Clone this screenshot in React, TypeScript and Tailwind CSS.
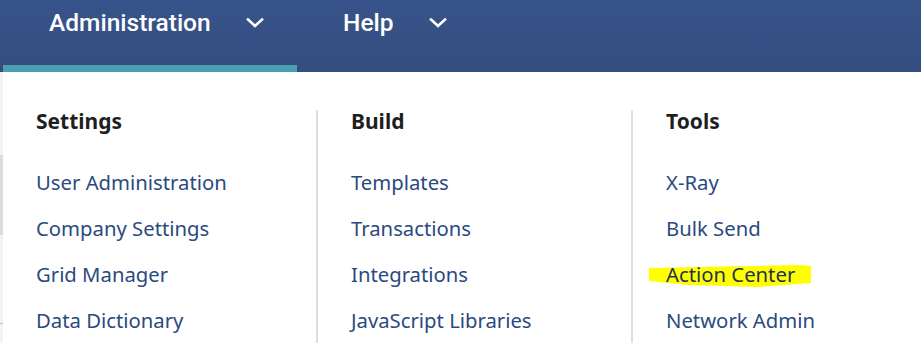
import React from "react";

const columns = [
  { title: "Settings", items: ["User Administration", "Company Settings", "Grid Manager", "Data Dictionary"] },
  { title: "Build", items: ["Templates", "Transactions", "Integrations", "JavaScript Libraries"] },
  { title: "Tools", items: ["X-Ray", "Bulk Send", "Action Center", "Network Admin"] },
];

function Chevron() {
  return (
    <svg width="18" height="12" viewBox="0 0 18 12" className="shrink-0">
      <path d="M2 2.5 L9 9 L16 2.5" fill="none" stroke="white" strokeWidth="2.6" strokeLinecap="square" />
    </svg>
  );
}

export default function App() {
  return (
    <div className="w-[921px] h-[343px] overflow-hidden bg-white" style={{ fontFamily: "'Noto Sans', sans-serif" }}>
      {/* Top nav */}
      <div className="h-[72px] bg-gradient-to-b from-[#37548b] to-[#334d7e] flex items-start">
        <div className="w-[294px] ml-[3px] h-full flex flex-col">
          <div className="flex items-center h-[46px] pl-[46px] gap-[35px]">
            <span className="text-white text-[24.5px] font-medium" style={{ fontFamily: "Roboto, sans-serif" }}>
              Administration
            </span>
            <Chevron />
          </div>
          <div className="mt-auto h-[7px] bg-[#4b9fb3]" />
        </div>
        <div className="flex items-center h-[46px] pl-[46px] gap-[35px]">
          <span className="text-white text-[24.5px] font-medium" style={{ fontFamily: "Roboto, sans-serif" }}>
            Help
          </span>
          <Chevron />
        </div>
      </div>

      {/* Dropdown panel */}
      <div className="flex h-[271px]">
        <div className="w-[3px] flex flex-col bg-[#f3f3f3]">
          <div className="h-[83px]" />
          <div className="h-[80px] bg-[#dcdcdc]" />
          <div className="h-[88px]" />
          <div className="h-px bg-[#bdbdbd]" />
        </div>
        <div className="flex-1 flex pt-[38px] relative">
          {columns.map((col, i) => (
            <div
              key={col.title}
              className={
                i === 0
                  ? "w-[313px] pl-[33px]"
                  : i === 1
                  ? "w-[315px] pl-[33px] border-l-2 border-[#dedede]"
                  : "flex-1 pl-[33px] border-l-2 border-[#dedede]"
              }
            >
              <div className="text-[21px] leading-[22px] font-bold text-[#1f1f1f]">{col.title}</div>
              <ul className="mt-[37px] flex flex-col gap-[19px]">
                {col.items.map((item) => (
                  <li key={item} className="text-[20.3px] leading-[27px] text-[#2b4a80] relative">
                    {item === "Action Center" && (
                      <svg className="absolute left-[-17px] top-[3px]" width="164" height="26" viewBox="0 0 164 26">
                        <path d="M0 4 L150 1 L162 2 L162 19 L110 23 L40 21 L0 17 Z" fill="#ffff00" />
                      </svg>
                    )}
                    <span className={item === "Action Center" ? "relative text-[#1e3358]" : ""}>{item}</span>
                  </li>
                ))}
              </ul>
            </div>
          ))}
        </div>
      </div>
    </div>
  );
}
